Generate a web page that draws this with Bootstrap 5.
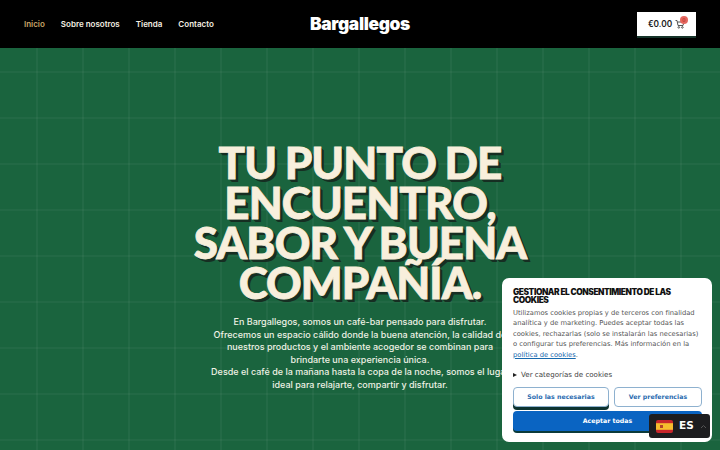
<!DOCTYPE html>
<html lang="es">
<head>
<meta charset="utf-8">
<title>Bargallegos</title>
<link href="https://cdn.jsdelivr.net/npm/bootstrap@5.3.0/dist/css/bootstrap.min.css" rel="stylesheet">
<style>
html,body{height:450px;overflow:hidden;}
body{background:#1a643e;font-family:"Inter","Liberation Sans",sans-serif;}
.topbar{height:48px;background:#000;padding:0 24px;}
.topbar .nav-link{padding:0;color:#f4efe2;font-size:8px;font-weight:600;}
.topbar .nav-link.active{color:#c9a468;}
.menu-list{gap:16px;width:260px;}
.brand-name{color:#fff;font-family:"Inter",sans-serif;font-weight:900;font-size:17.4px;letter-spacing:-.35px;line-height:1;text-decoration:none;}
.cart-wrap{width:260px;}
.cart-box{width:59px;height:24px;background:#fff;color:#1c1c1c;font-size:8.3px;font-weight:600;box-shadow:0 2px 0 #16342a;position:relative;gap:3px;}
.cart-count{position:absolute;left:43px;top:4px;width:8px;height:8px;border-radius:50%;background:#e5675f;color:#b93a34;font-size:5px;line-height:8px;text-align:center;}
.hero-area{height:402px;background-color:#1a643e;background-image:linear-gradient(90deg,rgba(255,255,255,.04) 2px,transparent 2px),linear-gradient(rgba(255,255,255,.035) 2px,transparent 2px);background-size:46px 46px;background-position:36px 23px;padding-top:94px;}
.hero-title{font-family:"Lato","Inter",sans-serif;font-weight:900;font-size:44px;line-height:40px;color:#f8efdc;margin:0 0 14px;-webkit-text-stroke:.8px #f8efdc;text-shadow:1px 1px 0 #162e22,2px 2px 0 #162e22,3px 3px 0 #162e22;letter-spacing:-.9px;word-spacing:-1px;}
.hero-copy{width:302px;font-size:9px;line-height:12.6px;color:#eef1e4;margin:0;font-weight:500;}
.consent-panel{position:fixed;left:502px;top:278px;width:210px;height:164px;background:#fff;border-radius:7px;padding:10px 10px 10px 11px;font-family:"DejaVu Sans",sans-serif;}
.consent-title{font-family:"Inter",sans-serif;font-weight:900;font-size:8.3px;line-height:8px;letter-spacing:-.42px;color:#111;margin:0 0 4px;}
.consent-text{font-size:6.75px;line-height:10.4px;color:#555;margin:0 0 9px;}
.consent-text a{color:#1668ad;}
.consent-more{font-size:7.1px;color:#444;line-height:11px;margin-bottom:7px;}
.tri{display:inline-block;border-left:4px solid #222;border-top:2.5px solid transparent;border-bottom:2.5px solid transparent;margin-right:4px;}
.consent-btn{font-family:"DejaVu Sans",sans-serif;font-size:6.25px;font-weight:700;border-radius:4px;padding:0;height:20px;}
.btn-outline-consent{background:#fff;border:1px solid #8eb1cf;color:#2b6cb0;}
.btn-solid-consent{background:#0a64c2;border:0;color:#fff;height:20px;box-shadow:0 2px 0 #0b3a3a;}
.first-btn{box-shadow:0 3px 0 #0d3330;width:96px;}
.second-btn{width:88px;}
.lang-box{position:fixed;left:649px;top:414px;width:61px;height:24px;background:#1d1d1f;border-radius:3px;color:#fff;font-family:"DejaVu Sans",sans-serif;font-weight:700;font-size:10.5px;padding-left:7px;gap:6px;}
.flag-es{width:17px;height:13px;border-radius:2px;display:block;}
</style>
</head>
<body>
<nav class="topbar d-flex align-items-center justify-content-between">
  <ul class="nav menu-list">
    <li class="nav-item"><a class="nav-link active" href="#">Inicio</a></li>
    <li class="nav-item"><a class="nav-link" href="#">Sobre nosotros</a></li>
    <li class="nav-item"><a class="nav-link" href="#">Tienda</a></li>
    <li class="nav-item"><a class="nav-link" href="#">Contacto</a></li>
  </ul>
  <a class="brand-name" href="#">Bargallegos</a>
  <div class="cart-wrap d-flex justify-content-end">
    <div class="cart-box d-flex align-items-center justify-content-center">
      <span>€0.00</span>
      <svg width="10" height="10" viewBox="0 0 10 10" fill="none" stroke="#555" stroke-width="1"><path d="M.5 1.5h1.5l1 5h5l1-3.5H2.4"/><circle cx="3.8" cy="8.4" r=".8"/><circle cx="7.4" cy="8.4" r=".8"/></svg>
      <span class="cart-count">0</span>
    </div>
  </div>
</nav>
<main class="hero-area d-flex flex-column align-items-center text-center">
  <h1 class="hero-title">TU PUNTO DE<br>ENCUENTRO,<br>SABOR Y BUENA<br>COMPAÑÍA.</h1>
  <p class="hero-copy">En Bargallegos, somos un café-bar pensado para disfrutar.<br>Ofrecemos un espacio cálido donde la buena atención, la calidad de nuestros productos y el ambiente acogedor se combinan para brindarte una experiencia única.<br>Desde el café de la mañana hasta la copa de la noche, somos el lugar ideal para relajarte, compartir y disfrutar.</p>
</main>
<aside class="consent-panel">
  <h2 class="consent-title">GESTIONAR EL CONSENTIMIENTO DE LAS COOKIES</h2>
  <p class="consent-text">Utilizamos cookies propias y de terceros con finalidad analítica y de marketing. Puedes aceptar todas las cookies, rechazarlas (solo se instalarán las necesarias) o configurar tus preferencias. Más información en la <a href="#">política de cookies</a>.</p>
  <div class="consent-more"><span class="tri"></span>Ver categorías de cookies</div>
  <div class="d-flex gap-1 mb-1 justify-content-between">
    <button class="btn consent-btn btn-outline-consent first-btn">Solo las necesarias</button>
    <button class="btn consent-btn btn-outline-consent second-btn">Ver preferencias</button>
  </div>
  <button class="btn consent-btn btn-solid-consent w-100 d-block">Aceptar todas</button>
</aside>
<div class="lang-box d-flex align-items-center">
  <svg class="flag-es" viewBox="0 0 17 13"><rect width="17" height="13" fill="#c8262b"/><rect y="3.2" width="17" height="6.6" fill="#f6bd2e"/><rect x="4" y="5" width="3" height="3" fill="#b5432a"/></svg>
  <span>ES</span>
  <svg width="7" height="5" viewBox="0 0 7 5" fill="none" stroke="#555" stroke-width="1"><path d="M1 4l2.5-2.5L6 4"/></svg>
</div>
<script src="https://cdn.jsdelivr.net/npm/bootstrap@5.3.0/dist/js/bootstrap.bundle.min.js"></script>
</body>
</html>
